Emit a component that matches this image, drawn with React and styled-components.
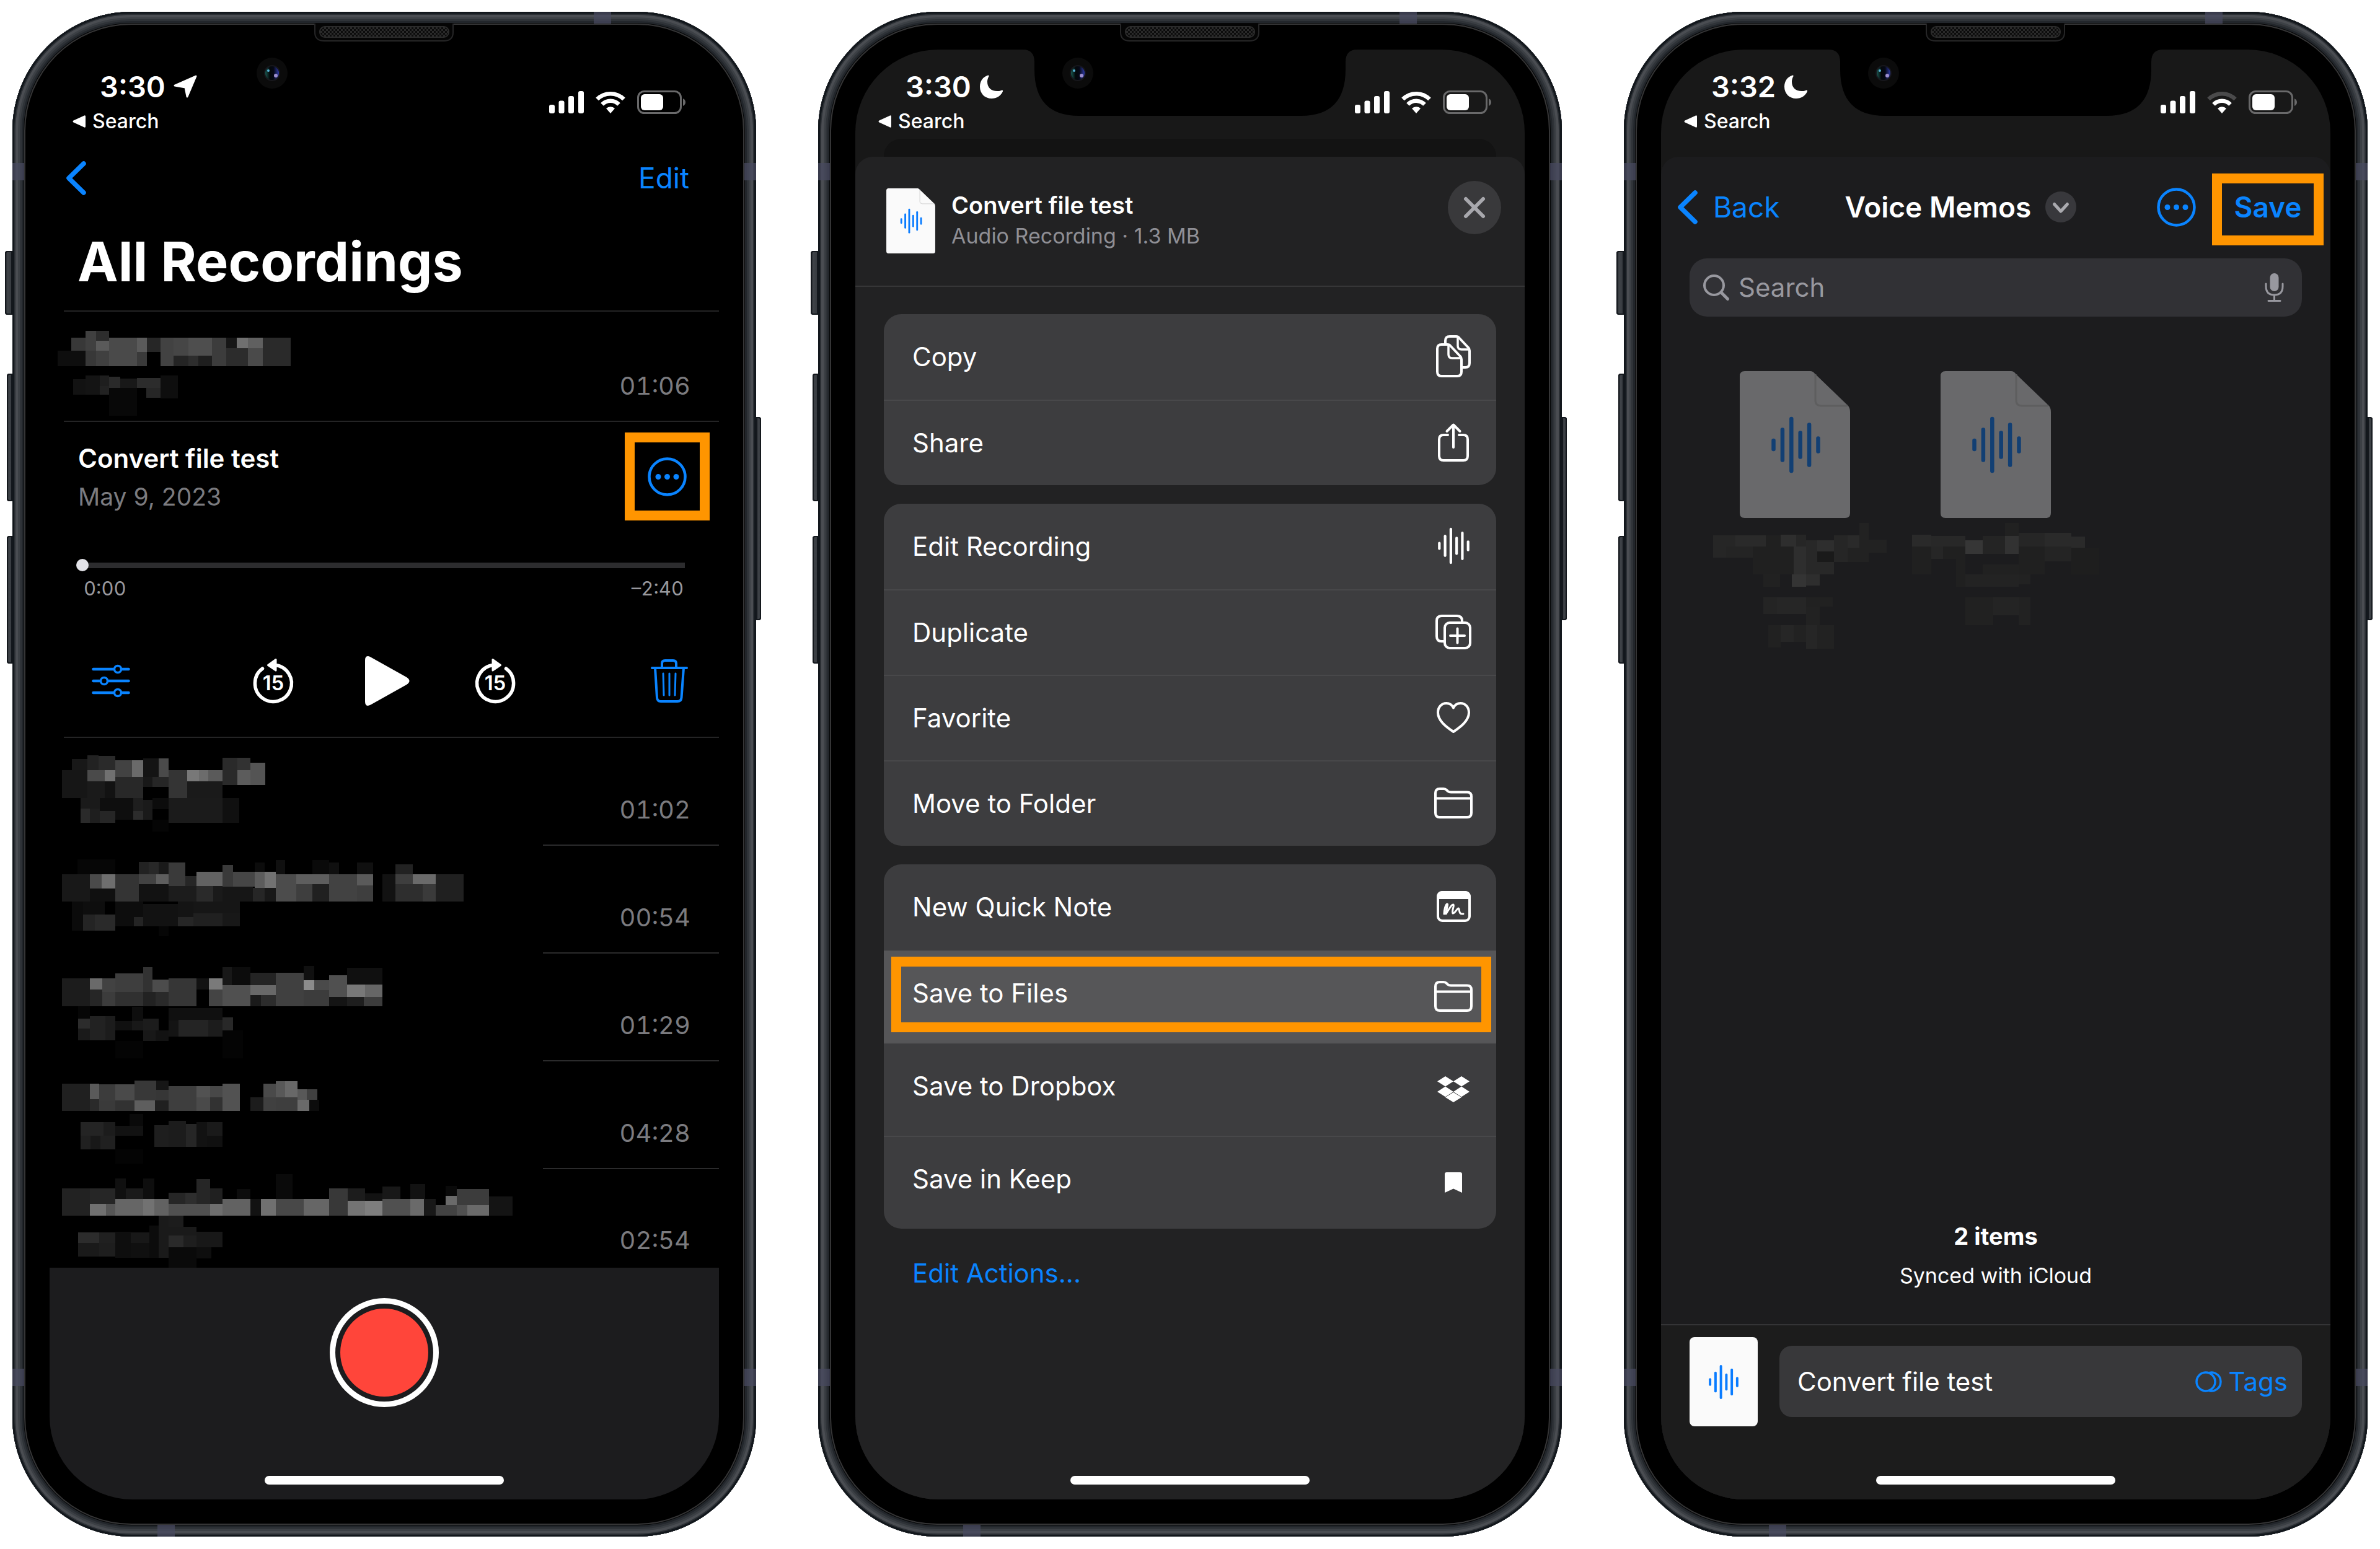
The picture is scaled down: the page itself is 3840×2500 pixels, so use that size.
import React, { useState } from "react";
import styled, { createGlobalStyle, css } from "styled-components";

const blue = "#0a84ff";
const orange = "#ff9500";
const font = `Inter, "Noto Sans", sans-serif`;

const GlobalStyle = createGlobalStyle`
  * { box-sizing: border-box; }
  body { margin: 0; background: #fff; font-family: ${font}; color: #fff; }
  button, input { font-family: inherit; color: inherit; margin: 0; }
  svg { display: block; flex: none; overflow: visible; }
`;

/* ---------- device ---------- */

const Page = styled.main`
  display: grid;
  grid-template-columns: repeat(3, minmax(0, 1fr));
  gap: 100px;
  padding: 19px 20px 20px;
`;

const Body = styled.section`
  position: relative;
  padding: 61px 60px 60px;
  border-radius: 192px;
  background: #000;
  box-shadow:
    inset 0 0 0 3px #12171c,
    inset 0 0 0 5px #2b2f34,
    inset 0 0 0 9px #4a4d52,
    inset 0 0 0 12px #3c4045,
    inset 0 0 0 15px #2f3338,
    inset 0 0 0 18px #22262b,
    inset 0 0 0 19px #060708,
    inset 0 0 0 21px #353536;
`;

const SideKey = styled.span`
  position: absolute;
  top: ${(p) => p.$top}px;
  height: ${(p) => p.$height}px;
  width: ${(p) => p.$width}px;
  ${(p) => (p.$right ? "left: 100%;" : "right: 100%;")}
  border-radius: ${(p) => (p.$right ? "0 4px 4px 0" : "4px 0 0 4px")};
  background: linear-gradient(to ${(p) => (p.$right ? "left" : "right")}, #15191e, #3f4348 35%, #33373c);
  box-shadow: inset 0 0 0 2px #14181d;
`;

const Antenna = styled.span`
  position: absolute;
  background: rgba(72, 74, 96, 0.72);
  ${(p) =>
    p.$edge === "left" || p.$edge === "right"
      ? css`
          ${p.$edge}: 0;
          top: ${p.$at}px;
          width: 19px;
          height: 28px;
        `
      : css`
          ${p.$edge}: 0;
          left: ${p.$at}px;
          width: 28px;
          height: 19px;
        `}
`;

const Screen = styled.div`
  position: relative;
  display: flex;
  flex-direction: column;
  aspect-ratio: 1080 / 2340;
  overflow: hidden;
  border-radius: 134px;
  background: ${(p) => p.$bg};
`;

const NotchWrap = styled.div`
  position: absolute;
  top: 19px;
  left: 50%;
  width: 542px;
  margin-left: -271px;
`;

const HomeIndicator = styled.div`
  position: absolute;
  left: 50%;
  bottom: 24px;
  width: 386px;
  height: 14px;
  margin-left: -193px;
  border-radius: 7px;
  background: #fff;
`;

const Notch = () => (
  <NotchWrap>
    <svg width="542" height="149" viewBox="0 0 542 149" aria-hidden="true">
      <defs>
        <pattern id="mesh" width="6" height="6" patternUnits="userSpaceOnUse">
          <rect width="6" height="6" fill="#0c0c0c" />
          <rect width="3" height="3" fill="#2a2a2a" />
          <rect x="3" y="3" width="3" height="3" fill="#2a2a2a" />
        </pattern>
        <linearGradient id="lens">
          <stop offset="0" stopColor="#1d6259" />
          <stop offset="0.35" stopColor="#04080a" />
          <stop offset="0.6" stopColor="#050816" />
          <stop offset="1" stopColor="#3340b8" />
        </linearGradient>
      </defs>
      <path d="M0 42H1Q20 42 20 62V74Q20 149 92 149H450Q522 149 522 74V62Q522 42 541 42H542V20H0Z" fill="#000" />
      <path d="M159 0V14Q159 28 174 28H367Q382 28 382 14V0" fill="#050505" stroke="#262627" strokeWidth="2" />
      <rect x="167" y="5" width="208" height="17" rx="8" fill="url(#mesh)" stroke="#2b2b2b" strokeWidth="2" />
      <circle cx="90" cy="80" r="25" fill="#0b0b0b" />
      <circle cx="90" cy="80" r="12" fill="url(#lens)" stroke="#17171c" strokeWidth="2" />
      <circle cx="84" cy="76" r="2" fill="#58b4d8" />
      <circle cx="96" cy="84" r="3" fill="#9d8fd0" />
    </svg>
  </NotchWrap>
);

/* ---------- status bar ---------- */

const Status = styled.header`
  display: flex;
  justify-content: space-between;
  align-items: flex-start;
  flex: none;
  height: 142px;
  padding: 30px 54px 0 37px;
`;

const Clock = styled.div`
  display: flex;
  align-items: center;
  gap: 13px;
  padding-left: 44px;
  font-size: 47px;
  font-weight: 600;
  line-height: 60px;
`;

const BackTo = styled.a`
  display: flex;
  align-items: center;
  gap: 11px;
  font-size: 32px;
  font-weight: 500;
  line-height: 52px;
  color: #fff;
  text-decoration: none;
`;

const Indicators = styled.div`
  display: flex;
  align-items: center;
  gap: 19px;
  height: 38px;
  margin-top: 36px;
`;

const LocationIcon = () => (
  <svg width="38" height="38" viewBox="0 0 38 38" fill="#fff" stroke="#fff" strokeWidth="3" strokeLinejoin="round" aria-hidden="true">
    <path d="M36 2 22 35 19 20 2 17Z" />
  </svg>
);

const MoonIcon = () => (
  <svg width="39" height="40" viewBox="0 0 39 40" fill="#fff" aria-hidden="true">
    <path d="M14 1.500C6 4 1 11 1 20c0 11 8 19 19 19 8 0 15-4.500 18-11.500.5-1.500-.5-2.300-2-1.800C33 27 31 27 29 27 19 27 13 21 13 12c0-3 .8-6 2.300-8.600.8-1.400.1-2.300-1.300-1.900Z" />
  </svg>
);

const StatusBar = ({ time, icon, weakWifi }) => (
  <Status>
    <div>
      <Clock>
        <span>{time}</span>
        {icon}
      </Clock>
      <BackTo href="#search">
        <svg width="21" height="20" viewBox="0 0 21 20" fill="#fff" aria-hidden="true">
          <path d="M19 .500Q21-.300 21 2V18q0 2.300-2 1.500L1.500 11.500Q-.500 10 1.500 8.500Z" />
        </svg>
        Search
      </BackTo>
    </div>
    <Indicators>
      <svg width="56" height="36" viewBox="0 0 56 36" fill="#fff" aria-hidden="true">
        <rect x="0" y="22" width="9" height="14" rx="3" />
        <rect x="15.500" y="15.500" width="9" height="20.500" rx="3" />
        <rect x="31" y="8" width="9" height="28" rx="3" />
        <rect x="47" y="0" width="9" height="36" rx="3" />
      </svg>
      <svg width="48" height="36" viewBox="0 0 48 36" fill="none" stroke="#fff" strokeWidth="6.500" aria-hidden="true">
        <path d="M2.500 13A30.500 30.500 0 0 1 45.500 13" stroke={weakWifi ? "#4a4a4b" : "#fff"} />
        <path d="M10.500 21.500A19 19 0 0 1 37.500 21.500" />
        <path d="M24 36 17 28A10.500 10.500 0 0 1 31 28Z" fill="#fff" stroke="none" />
      </svg>
      <svg width="78" height="38" viewBox="0 0 78 38" aria-hidden="true">
        <rect x="1.500" y="1.500" width="69" height="35" rx="10" fill="none" stroke="#69696a" strokeWidth="3" />
        <rect x="6" y="6" width="36" height="26" rx="6" fill="#fff" />
        <path d="M74 13Q78 15 78 19T74 25Z" fill="#69696a" />
      </svg>
    </Indicators>
  </Status>
);

const Phone = ({ bg, status, children, label }) => (
  <Body aria-label={label}>
    <SideKey $top={386} $height={103} $width={12} />
    <SideKey $top={584} $height={206} $width={9} />
    <SideKey $top={846} $height={206} $width={9} />
    <SideKey $right $top={654} $height={328} $width={8} />
    <Antenna $edge="left" $at={244} />
    <Antenna $edge="right" $at={244} />
    <Antenna $edge="left" $at={2190} />
    <Antenna $edge="right" $at={2190} />
    <Antenna $edge="top" $at={938} />
    <Antenna $edge="bottom" $at={234} />
    <Screen $bg={bg}>
      {status}
      {children}
      <HomeIndicator />
    </Screen>
    <Notch />
  </Body>
);

/* ---------- shared pieces ---------- */

const TextButton = styled.button`
  display: flex;
  align-items: center;
  gap: 25px;
  padding: 0;
  border: 0;
  background: none;
  color: ${blue};
  font-size: 46px;
  font-weight: ${(p) => (p.$strong ? 600 : 400)};
  line-height: 60px;
`;

const IconButton = styled.button`
  display: flex;
  align-items: center;
  justify-content: center;
  padding: 0;
  border: 0;
  background: none;
  color: ${(p) => p.$color || blue};
`;

const ChevronBack = () => (
  <svg width="32" height="55" viewBox="0 0 32 55" fill="none" stroke="currentColor" strokeWidth="7.500" strokeLinecap="round" strokeLinejoin="round" aria-hidden="true">
    <path d="M28 4 4 27.500 28 51" />
  </svg>
);

const MoreIcon = () => (
  <svg width="63" height="63" viewBox="0 0 63 63" fill="currentColor" aria-hidden="true">
    <circle cx="31.500" cy="31.500" r="29" fill="none" stroke="currentColor" strokeWidth="4.500" />
    <circle cx="17" cy="31.500" r="4.500" />
    <circle cx="31.500" cy="31.500" r="4.500" />
    <circle cx="46" cy="31.500" r="4.500" />
  </svg>
);

const waveHeights = [20, 55, 90, 45, 71, 27];

const WaveBars = () =>
  waveHeights.map((h, i) => (
    <line key={i} x1={3.5 + i * 14.4} x2={3.5 + i * 14.4} y1={45 - h / 2 + 3} y2={45 + h / 2 - 3} />
  ));

const WaveIcon = ({ width, height }) => (
  <svg width={width} height={height} viewBox="0 0 79 90" stroke="currentColor" strokeWidth="6.500" strokeLinecap="round" aria-hidden="true">
    <WaveBars />
  </svg>
);

const DocIcon = ({ width, height, paper, fold, wave }) => (
  <svg width={width} height={height} viewBox="0 0 178 237" aria-hidden="true">
    <path d="M8 0H114Q118 0 121 4L175 56Q178 60 178 66V229Q178 237 170 237H8Q0 237 0 229V8Q0 0 8 0Z" fill={paper} />
    <path d="M122 5V47Q122 56 132 56H174" fill="none" stroke={fold} strokeWidth="3" />
    <g transform="translate(51 74)" stroke={wave} strokeWidth="6.500" strokeLinecap="round">
      <WaveBars />
    </g>
  </svg>
);

/* Blocks are [left, top, right, bottom, grey level]. */
const Mosaic = ({ blocks, box, width, height }) => (
  <svg width={width} height={height} viewBox={box} preserveAspectRatio="none" shapeRendering="crispEdges" aria-hidden="true">
    {blocks.map(([l, t, r, b, g], i) => (
      <rect key={i} x={l} y={t} width={r - l} height={b - t} fill={`rgb(${g},${g},${g})`} />
    ))}
  </svg>
);

/* ---------- recordings ---------- */

const NavBar = styled.nav`
  display: flex;
  align-items: center;
  justify-content: space-between;
  flex: none;
  height: 130px;
  padding: 0 48px 0 27px;
`;

const Title = styled.h1`
  margin: 0 0 9px;
  padding-left: 45px;
  font-size: 88px;
  font-weight: 700;
  line-height: 140px;
`;

const List = styled.ul`
  margin: 0;
  padding: 0 0 0 23px;
  list-style: none;
`;

const Row = styled.li`
  display: flex;
  height: ${(p) => p.$height}px;
  border-top: ${(p) => (p.$full ? "2px solid #242425" : "0")};
`;

const Duration = styled.span`
  display: flex;
  flex: 1;
  align-items: flex-end;
  justify-content: flex-end;
  padding: 0 46px ${(p) => (p.$short ? 20 : 32)}px 0;
  border-top: ${(p) => (p.$line ? "2px solid #2b2b2c" : "0")};
  font-size: 40px;
  font-variant-numeric: tabular-nums;
  line-height: 48px;
  color: #7b7b7f;
`;

const Player = styled.li`
  height: 510px;
  padding-top: 17px;
  border-top: 2px solid #242425;
`;

const PlayerHead = styled.div`
  display: flex;
  justify-content: space-between;
  padding: 0 15px 0 23px;
`;

const PlayerName = styled.h2`
  margin: 11px 0 0;
  font-size: 42px;
  font-weight: 600;
  line-height: 62px;
`;

const PlayerDate = styled.p`
  margin: 0;
  font-size: 39px;
  line-height: 62px;
  color: #7b7b7f;
`;

const MarkedMore = styled(IconButton)`
  width: 137px;
  height: 142px;
  border: 16px solid ${orange};
`;

const Scrubber = styled.input`
  display: block;
  appearance: none;
  width: calc(100% - 75px);
  height: 20px;
  margin: 62px 55px 0 20px;
  background: linear-gradient(#2c2c2e, #2c2c2e) right center / calc(100% - 10px) 9px no-repeat;
  &::-webkit-slider-thumb {
    appearance: none;
    width: 20px;
    height: 20px;
    border-radius: 50%;
    background: #e3e3e8;
  }
`;

const Times = styled.div`
  display: flex;
  justify-content: space-between;
  margin: 8px 57px 0 32px;
  font-size: 31px;
  font-variant-numeric: tabular-nums;
  line-height: 40px;
  color: #98989d;
`;

const Controls = styled.div`
  display: grid;
  grid-template-columns: 1fr auto 1fr;
  align-items: center;
  height: 90px;
  margin-top: 84px;
  padding: 0 50px 0 27px;
`;

const Transport = styled.div`
  display: flex;
  align-items: center;
  gap: 105px;
`;

const OptionsButton = styled(IconButton)`
  justify-self: start;
  margin-left: 18px;
`;

const TrashButton = styled(IconButton)`
  justify-self: end;
`;

const RecordBar = styled.footer`
  display: flex;
  flex: 1;
  align-items: flex-start;
  justify-content: center;
  padding-top: 49px;
  background: #1c1c1e;
`;

const RecordButton = styled.button`
  width: 176px;
  height: 176px;
  padding: 8px;
  border: 9px solid #fff;
  border-radius: 50%;
  background: #ff453a content-box;
`;

const SkipIcon = ({ forward }) => (
  <svg width="66" height="73" viewBox="0 0 66 73" aria-hidden="true">
    <g transform={forward ? "matrix(-1 0 0 1 66 0)" : undefined}>
      <path d="M36 10.500A29.500 29.500 0 1 1 15.500 16" fill="none" stroke="#fff" strokeWidth="5.500" strokeLinecap="round" />
      <path d="M37 1.500V19L24.500 10.500Z" fill="#fff" stroke="#fff" strokeWidth="3" strokeLinejoin="round" />
    </g>
    <text x="33" y="51" textAnchor="middle" fontFamily="Inter, sans-serif" fontSize="33" fontWeight="600" fill="#fff">
      15
    </text>
  </svg>
);

const rows = [
  {
    time: "01:02",
    box: "128 15 962 303",
    blocks: [
      [124,106,175,184,22],[144,75,175,106,24],[175,64,198,106,34],[198,66,231,106,42],[175,106,210,137,74],[210,106,231,137,112],
      [175,137,210,184,26],[210,137,231,184,18],[231,77,265,124,66],[265,77,287,124,106],[231,124,287,184,40],[287,72,319,124,20],
      [319,72,338,124,74],[287,124,306,152,24],[306,124,338,152,38],[338,106,376,184,52],[376,106,399,137,120],[399,106,418,137,108],
      [418,106,446,137,90],[376,137,446,184,26],[446,70,477,148,42],[477,70,502,106,50],[477,106,502,148,92],[502,84,533,148,84],
      [161,184,200,213,26],[200,184,231,220,14],[161,213,180,253,42],[180,213,200,253,30],[200,220,231,253,38],[231,184,268,245,14],
      [268,184,287,220,30],[268,220,287,245,44],[287,190,306,245,26],[306,184,338,216,12],[338,184,446,253,27],[446,184,480,254,16],
      [306,245,338,278,5],
    ],
  },
  {
    time: "00:54",
    box: "128 318 962 303",
    blocks: [
      [124,401,180,478,24],[180,401,204,442,74],[204,401,231,442,110],[180,442,231,478,16],[231,401,278,478,52],[278,366,298,401,34],
      [298,366,319,401,40],[319,366,338,401,26],[278,401,314,430,66],[314,401,338,430,94],[278,430,338,478,18],[338,368,372,434,58],
      [372,406,394,434,38],[338,434,394,478,28],[394,395,446,434,98],[394,434,428,478,42],[428,434,446,478,26],[446,375,468,436,58],
      [446,436,508,478,22],[468,395,511,436,70],[511,395,531,440,92],[531,395,553,440,114],[508,440,531,478,38],[531,440,553,478,24],
      [511,368,531,395,12],[553,362,572,401,16],[553,401,595,478,76],[595,401,661,430,94],[595,430,627,478,62],[627,430,661,478,32],
      [627,362,661,401,10],[661,368,680,401,16],[661,401,717,478,66],[717,368,749,401,16],[717,401,749,433,90],[717,433,749,478,62],
      [768,401,794,478,18],[794,373,829,401,34],[794,401,829,430,62],[829,401,875,430,106],[794,430,849,478,46],[849,430,875,478,58],
      [875,401,931,478,32],[156,360,231,401,6],[144,478,166,560,11],[166,478,210,514,14],[166,514,190,560,36],[190,514,231,560,42],
      [231,478,287,548,13],[269,521,287,548,36],[287,486,357,548,18],[357,478,388,521,20],[388,478,482,514,22],[357,521,388,548,38],
      [388,512,446,548,32],[446,512,482,548,24],[319,548,338,576,6],
    ],
  },
  {
    time: "01:29",
    box: "128 621 962 303",
    blocks: [
      [124,695,180,773,28],[180,695,205,725,106],[205,695,231,733,66],[180,725,205,773,38],[205,733,231,773,60],[231,681,287,733,62],
      [231,733,287,773,48],[287,662,306,733,50],[306,697,338,733,76],[287,733,312,773,34],[312,733,338,773,42],[338,695,394,773,54],
      [394,695,419,725,18],[419,695,446,725,122],[419,725,446,773,68],[446,662,465,714,24],[465,662,502,714,12],[446,714,502,773,80],
      [502,679,553,714,36],[502,714,553,742,104],[502,742,524,773,26],[524,742,553,773,44],[553,679,609,773,64],[609,660,631,700,16],
      [609,700,631,728,140],[631,700,661,728,74],[609,728,661,773,60],[661,685,697,747,80],[661,747,697,773,20],[697,664,768,711,16],
      [697,711,733,747,120],[733,711,768,747,102],[697,747,730,773,30],[730,747,768,773,60],[157,773,180,808,6],[157,808,180,836,44],
      [157,836,180,868,26],[180,801,211,868,34],[211,801,231,868,28],[231,814,265,841,16],[265,774,287,814,14],[265,814,287,841,24],
      [287,808,319,841,28],[287,841,312,870,24],[312,841,338,870,18],[338,778,446,812,16],[338,812,358,857,20],[358,810,418,857,36],
      [418,810,446,857,28],[446,803,468,841,40],[446,841,488,918,4],[231,870,287,918,4],
    ],
  },
  {
    time: "04:28",
    box: "128 924 962 303",
    blocks: [
      [124,990,180,1067,32],[180,990,199,1033,90],[199,992,231,1037,60],[180,1033,199,1067,42],[199,1037,231,1067,58],[231,992,270,1037,74],
      [231,1037,270,1067,50],[270,981,314,1037,56],[270,1037,311,1067,94],[314,981,338,1007,22],[314,1007,338,1037,54],[311,1037,338,1067,32],
      [338,998,394,1067,62],[394,998,422,1028,82],[422,998,446,1028,72],[394,1028,422,1067,74],[422,1028,446,1067,50],[446,990,482,1067,82],
      [503,1028,529,1067,28],[529,990,553,1028,74],[529,1028,553,1067,64],[553,984,572,1028,88],[572,984,597,1028,104],[553,1028,597,1067,62],
      [597,1006,616,1035,88],[616,1006,637,1035,64],[597,1035,621,1067,106],[621,1035,641,1067,12],[161,1098,208,1136,36],[208,1098,231,1136,28],
      [161,1136,182,1175,32],[182,1136,202,1175,24],[202,1136,231,1175,32],[231,1108,287,1136,18],[260,1075,287,1108,10],[310,1106,338,1168,30],
      [338,1094,373,1167,28],[373,1103,394,1167,38],[394,1098,416,1167,18],[416,1098,446,1136,26],[416,1136,446,1167,16],[231,1175,287,1214,4],
    ],
  },
  {
    time: "02:54",
    box: "128 1227 962 281",
    short: true,
    blocks: [
      [124,1284,180,1361,34],[180,1284,231,1328,38],[180,1328,213,1361,112],[213,1328,231,1361,86],[231,1256,253,1314,16],[253,1284,287,1314,26],
      [287,1256,310,1314,14],[231,1314,287,1361,102],[287,1314,310,1361,114],[310,1314,338,1361,98],[338,1296,372,1328,38],[372,1296,394,1328,46],
      [394,1258,422,1328,38],[422,1284,446,1328,32],[338,1328,422,1361,80],[422,1328,446,1361,110],[446,1314,502,1361,98],[475,1286,502,1314,12],
      [502,1314,524,1361,18],[524,1314,553,1361,112],[553,1244,587,1314,10],[553,1314,609,1361,72],[609,1314,661,1361,102],[661,1284,698,1361,56],
      [698,1284,733,1319,28],[698,1319,733,1361,116],[733,1298,768,1319,18],[733,1319,768,1361,126],[768,1279,804,1314,24],[768,1314,824,1361,80],
      [824,1272,854,1314,18],[824,1314,851,1361,106],[851,1314,875,1361,24],[875,1331,917,1361,66],[894,1305,917,1331,106],[894,1277,917,1305,10],
      [917,1286,982,1331,60],[917,1331,938,1361,80],[938,1331,982,1361,106],[982,1307,1029,1361,20],[157,1409,199,1439,44],[199,1409,231,1439,32],
      [157,1439,199,1476,26],[199,1439,231,1476,30],[231,1406,263,1480,14],[263,1408,300,1439,24],[263,1439,300,1480,16],[300,1390,319,1480,12],
      [319,1362,338,1480,26],[338,1362,368,1392,28],[338,1392,394,1418,26],[338,1418,368,1451,42],[368,1418,394,1451,30],[394,1406,446,1450,24],
      [394,1450,424,1482,14],[338,1451,394,1508,10],
    ],
  },
];

const firstRow = [
  [143,1219,172,1268,56],[172,1196,193,1268,64],[193,1196,219,1232,45],[193,1232,219,1268,90],[116,1268,172,1322,14],[172,1268,193,1322,56],
  [193,1268,219,1322,64],[219,1221,275,1322,74],[275,1221,295,1272,90],[275,1272,295,1322,58],[295,1221,322,1272,38],[322,1221,348,1322,66],
  [348,1221,378,1284,70],[378,1221,426,1284,78],[348,1284,378,1322,36],[378,1284,398,1322,45],[398,1284,426,1322,30],[426,1221,454,1322,60],
  [454,1221,475,1257,22],[475,1221,498,1257,112],[498,1221,528,1257,96],[454,1257,498,1322,44],[498,1257,528,1322,74],[528,1221,584,1322,42],
  [147,1369,172,1427,18],[172,1357,200,1427,20],[200,1357,219,1394,30],[200,1394,219,1427,34],[219,1360,241,1402,42],[241,1367,275,1402,24],
  [275,1366,322,1402,44],[294,1402,322,1438,38],[322,1357,357,1440,14],[219,1402,275,1502,8],
];

const Recordings = () => {
  const [position, setPosition] = useState(0);
  return (
    <Phone bg="#000" label="Voice Memos recordings" status={<StatusBar time="3:30" icon={<LocationIcon />} />}>
      <NavBar>
        <IconButton aria-label="Back">
          <ChevronBack />
        </IconButton>
        <TextButton>Edit</TextButton>
      </NavBar>
      <Title>All Recordings</Title>
      <List>
        <Row $full $height={178}>
          <Mosaic blocks={firstRow} box="128 1126 962 394" width={773} height={176} />
          <Duration>01:06</Duration>
        </Row>
        <Player>
          <PlayerHead>
            <div>
              <PlayerName>Convert file test</PlayerName>
              <PlayerDate>May 9, 2023</PlayerDate>
            </div>
            <MarkedMore aria-label="More">
              <MoreIcon />
            </MarkedMore>
          </PlayerHead>
          <Scrubber
            type="range"
            min="0"
            max="160"
            value={position}
            onChange={(e) => setPosition(Number(e.target.value))}
            aria-label="Playback position"
          />
          <Times>
            <span>0:00</span>
            <span>–2:40</span>
          </Times>
          <Controls>
            <OptionsButton aria-label="Playback options">
              <svg width="62" height="52" viewBox="0 0 62 52" fill="none" stroke="currentColor" strokeWidth="4.500" strokeLinecap="round" aria-hidden="true">
                <path d="M2.500 7H35M49 7H59.500M2.500 26H13M27 26H59.500M2.500 45H35M49 45H59.500" />
                <circle cx="42" cy="7" r="5.500" strokeWidth="3.500" />
                <circle cx="20" cy="26" r="5.500" strokeWidth="3.500" />
                <circle cx="42" cy="45" r="5.500" strokeWidth="3.500" />
              </svg>
            </OptionsButton>
            <Transport>
              <IconButton aria-label="Back 15 seconds">
                <SkipIcon />
              </IconButton>
              <IconButton aria-label="Play">
                <svg width="82" height="80" viewBox="-10 0 82 80" fill="#fff" aria-hidden="true">
                  <path d="M0 7Q0-3 9 1.500L67 34Q76 40 67 46L9 78.500Q0 83 0 73Z" />
                </svg>
              </IconButton>
              <IconButton aria-label="Forward 15 seconds">
                <SkipIcon forward />
              </IconButton>
            </Transport>
            <TrashButton aria-label="Delete">
              <svg width="60" height="70" viewBox="0 0 60 70" fill="none" stroke="currentColor" strokeWidth="4" strokeLinecap="round" strokeLinejoin="round" aria-hidden="true">
                <path d="M2 14H58M18 14V7Q18 2 23 2H36Q41 2 41 7V14M7 14 10 62Q10.500 68 16 68H43Q49 68 49.500 62L53 14" />
                <path d="M20 23 21 58M30 23V58M40 23 39 58" strokeWidth="3" />
              </svg>
            </TrashButton>
          </Controls>
        </Player>
        {rows.map((row, i) => (
          <Row key={row.time} $full={i === 0} $height={row.short ? 161 : 174}>
            <Mosaic blocks={row.blocks} box={row.box} width={773} height={row.short ? 161 : 174} />
            <Duration $line={i > 0} $short={row.short}>
              {row.time}
            </Duration>
          </Row>
        ))}
      </List>
      <RecordBar>
        <RecordButton aria-label="Record" />
      </RecordBar>
    </Phone>
  );
};

/* ---------- share sheet ---------- */

const SheetBehind = styled.div`
  flex: none;
  height: 29px;
  margin: 2px 46px 0;
  border-radius: 28px 28px 0 0;
  background: #131313;
`;

const Sheet = styled.div`
  display: flex;
  flex: 1;
  flex-direction: column;
  margin-top: ${(p) => p.$gap || 0}px;
  border-radius: 28px 28px 0 0;
  background: ${(p) => p.$bg};
`;

const SheetHead = styled.div`
  display: flex;
  align-items: flex-start;
  height: 210px;
  padding: 39px 38px 0 50px;
  border-bottom: 2px solid #363637;
`;

const HeadIcon = styled.div`
  padding-top: 12px;
`;

const HeadText = styled.div`
  flex: 1;
  padding: 15px 0 0 26px;
`;

const HeadTitle = styled.h2`
  margin: 0;
  font-size: 38px;
  font-weight: 600;
  line-height: 49px;
`;

const HeadMeta = styled.p`
  margin: 0;
  font-size: 34px;
  line-height: 49px;
  color: #8f8f95;
`;

const CloseButton = styled.button`
  display: flex;
  align-items: center;
  justify-content: center;
  width: 86px;
  height: 86px;
  padding: 0;
  border: 0;
  border-radius: 50%;
  background: #39393b;
  color: #a8a8ad;
`;

const Cards = styled.div`
  display: flex;
  flex-direction: column;
  gap: 30px;
  padding: 44px 46px 0;
`;

const Card = styled.div`
  overflow: hidden;
  border-radius: 28px;
  background: #3d3d3f;
`;

const Action = styled.button`
  position: relative;
  display: flex;
  align-items: center;
  justify-content: space-between;
  width: 100%;
  height: ${(p) => (p.$tall ? 150 : 138)}px;
  padding: 0 37px 2px 46px;
  border: 0;
  background: ${(p) => (p.$active ? "#565658" : "none")};
  font-size: 42px;
  text-align: left;
  & + & {
    border-top: 2px solid ${(p) => (p.$active ? "#565658" : "#48484a")};
  }
`;

const ActionLabel = styled.span`
  padding-bottom: ${(p) => (p.$tall ? 12 : 0)}px;
`;

const ActionIcon = styled.span`
  display: flex;
  justify-content: center;
  width: 64px;
`;

const Marker = styled.span`
  position: absolute;
  inset: 9px 8px 17px 12px;
  border: 16px solid ${orange};
`;

const EditActions = styled.button`
  align-self: flex-start;
  margin: 12px 0 0;
  padding: 0 46px;
  border: 0;
  background: none;
  color: ${blue};
  font-size: 42px;
  line-height: 60px;
`;

const Line = ({ width, height, children }) => (
  <svg
    width={width}
    height={height}
    viewBox={`0 0 ${width} ${height}`}
    fill="none"
    stroke="#fff"
    strokeWidth="4"
    strokeLinecap="round"
    strokeLinejoin="round"
    aria-hidden="true"
  >
    {children}
  </svg>
);

const FolderIcon = () => (
  <Line width={62} height={50}>
    <path d="M2 9Q2 2 9 2H15Q18 2 20 4L22 6Q24 7.500 27 7.500H53Q60 7.500 60 14.500V41Q60 48 53 48H9Q2 48 2 41ZM2 17.500H60" />
  </Line>
);

const groups = [
  [
    {
      label: "Copy",
      icon: (
        <Line width={56} height={68}>
          <path d="M2 22Q2 15 9 15H19Q21 15 22.500 16.500L39 34Q41 36 41 39V59Q41 66 34 66H9Q2 66 2 59Z" />
          <path d="M20 16V31Q20 37 26 37H40" strokeWidth="3.500" />
          <path d="M15 14V9Q15 2 22 2H33Q35 2 36.500 3.500L52 20Q54 22 54 25V45Q54 52 47 52H42" />
          <path d="M35 3V17Q35 23 41 23H53" strokeWidth="3.500" />
        </Line>
      ),
    },
    {
      label: "Share",
      icon: (
        <Line width={50} height={62}>
          <path d="M16 19H9Q2 19 2 26V53Q2 60 9 60H41Q48 60 48 53V26Q48 19 41 19H34M25 39V3M14.500 13 25 2.500 35.500 13" />
        </Line>
      ),
    },
  ],
  [
    { label: "Edit Recording", icon: <WaveIcon width={51} height={58} /> },
    {
      label: "Duplicate",
      icon: (
        <Line width={58} height={56}>
          <path d="M15 43H10Q2 43 2 35V10Q2 2 10 2H35Q43 2 43 10V13" />
          <rect x="15" y="13" width="41" height="41" rx="8" />
          <path d="M35.500 22.500V45.500M24 34H47" />
        </Line>
      ),
    },
    {
      label: "Favorite",
      icon: (
        <Line width={54} height={50}>
          <path d="M27 48C15 40 2 30 2 17C2 8 8 2 15.500 2C21 2 25 5 27 9.500C29 5 33 2 38.500 2C46 2 52 8 52 17C52 30 39 40 27 48Z" />
        </Line>
      ),
    },
    { label: "Move to Folder", icon: <FolderIcon /> },
  ],
  [
    {
      label: "New Quick Note",
      icon: (
        <Line width={55} height={50}>
          <rect x="2" y="2" width="51" height="46" rx="7" />
          <path d="M2 11Q2 2 10 2H45Q53 2 53 11Z" fill="#fff" />
          <path d="M12 37C12 32 14 22 17 21C19 21 15 31 15 37C19 31 24 21 27 22C29 23 24 32 26 36C29 37 33 28 35 28C38 29 34 38 43 37" strokeWidth="3" />
        </Line>
      ),
    },
    { label: "Save to Files", icon: <FolderIcon />, tall: true, active: true },
    {
      label: "Save to Dropbox",
      tall: true,
      icon: (
        <svg width="52" height="42" viewBox="0 0 52 42" fill="#fff" aria-hidden="true">
          <path d="M13 0 26 8.300 13 16.600 0 8.300ZM39 0 52 8.300 39 16.600 26 8.300ZM13 16.600 26 24.900 13 33.200 0 24.900ZM39 16.600 52 24.900 39 33.200 26 24.900ZM26 26 39 34 26 42 13 34Z" />
        </svg>
      ),
    },
    {
      label: "Save in Keep",
      tall: true,
      icon: (
        <svg width="28" height="33" viewBox="0 0 28 33" fill="#fff" aria-hidden="true">
          <path d="M3 0H25Q28 0 28 3V33L14 26.500 0 33V3Q0 0 3 0Z" />
        </svg>
      ),
    },
  ],
];

const ShareSheet = () => (
  <Phone bg="#181818" label="Share sheet" status={<StatusBar time="3:30" icon={<MoonIcon />} />}>
    <SheetBehind />
    <Sheet $bg="#222223">
      <SheetHead>
        <HeadIcon>
          <DocIcon width={79} height={105} paper="#fafafa" fold="#dcdcdc" wave="#0a7cff" />
        </HeadIcon>
        <HeadText>
          <HeadTitle>Convert file test</HeadTitle>
          <HeadMeta>Audio Recording · 1.3 MB</HeadMeta>
        </HeadText>
        <CloseButton aria-label="Close">
          <svg width="36" height="36" viewBox="0 0 36 36" stroke="currentColor" strokeWidth="6" strokeLinecap="round" aria-hidden="true">
            <path d="M4 4 32 32M32 4 4 32" />
          </svg>
        </CloseButton>
      </SheetHead>
      <Cards>
        {groups.map((group, i) => (
          <Card key={i}>
            {group.map((action) => (
              <Action key={action.label} $tall={action.tall} $active={action.active}>
                <ActionLabel $tall={action.tall}>{action.label}</ActionLabel>
                <ActionIcon>{action.icon}</ActionIcon>
                {action.active && <Marker />}
              </Action>
            ))}
          </Card>
        ))}
        <EditActions>Edit Actions...</EditActions>
      </Cards>
    </Sheet>
  </Phone>
);

/* ---------- save dialog ---------- */

const DialogNav = styled.nav`
  display: flex;
  align-items: center;
  flex: none;
  height: 162px;
  padding: 0 11px 0 27px;
`;

const FolderButton = styled.button`
  display: flex;
  align-items: center;
  gap: 23px;
  margin: 0 auto 0 105px;
  padding: 0;
  border: 0;
  background: none;
  font-size: 46px;
  font-weight: 600;
  line-height: 60px;
`;

const MarkedSave = styled(TextButton)`
  justify-content: center;
  width: 180px;
  height: 116px;
  margin: 8px 0 0 26px;
  padding-bottom: 8px;
  border: 16px solid ${orange};
`;

const SearchBox = styled.label`
  display: flex;
  align-items: center;
  flex: none;
  gap: 15px;
  height: 94px;
  margin: 2px 46px 0;
  padding: 0 29px 0 22px;
  border-radius: 28px;
  background: #313135;
  color: #98989f;
`;

const PlainInput = styled.input`
  flex: 1;
  min-width: 0;
  padding: 0;
  border: 0;
  outline: 0;
  background: none;
  font-size: 42px;
  line-height: 60px;
  &::placeholder {
    color: #98989f;
    opacity: 1;
  }
`;

const Files = styled.ul`
  display: flex;
  flex: 1;
  margin: 0;
  padding: 88px 54px 0;
  list-style: none;
`;

const FileItem = styled.li`
  display: flex;
  flex-direction: column;
  align-items: center;
  gap: 8px;
  width: 324px;
`;

const Summary = styled.div`
  padding-bottom: 47px;
  border-bottom: 2px solid #343436;
  text-align: center;
  line-height: 63px;
`;

const Count = styled.p`
  margin: 0;
  font-size: 38px;
  font-weight: 700;
`;

const Sync = styled.p`
  margin: 0;
  font-size: 34px;
`;

const SaveFooter = styled.footer`
  display: flex;
  align-items: flex-start;
  gap: 35px;
  height: 281px;
  padding: 19px 46px 0;
  background: #1c1c1c;
`;

const Thumb = styled.div`
  display: flex;
  align-items: center;
  justify-content: center;
  flex: none;
  width: 110px;
  height: 144px;
  border-radius: 8px;
  background: #fafafa;
  color: #0a7cff;
`;

const NameField = styled.div`
  display: flex;
  align-items: center;
  flex: 1;
  min-width: 0;
  height: 115px;
  margin-top: 14px;
  padding: 0 23px 0 29px;
  border-radius: 20px;
  background: #38383a;
`;

const TagsButton = styled(TextButton)`
  gap: 9px;
  font-size: 42px;
`;

const fileOne = [
  [207,847,253,940,38],[253,847,314,894,42],[233,894,288,940,36],[314,847,345,894,32],[345,844,376,894,46],[376,844,397,894,38],
  [288,894,371,1010,32],[371,894,397,1010,46],[397,868,420,1010,40],[420,868,454,915,46],[420,915,454,959,26],[420,959,454,1010,40],
  [454,847,481,959,38],[481,847,505,898,42],[481,898,505,959,34],[505,794,525,959,34],[525,865,561,920,34],[310,1010,344,1063,33],
  [368,1010,397,1063,52],[397,1010,425,1058,46],[310,1108,337,1179,36],[337,1108,397,1179,38],[397,1108,451,1147,33],[397,1147,425,1226,34],
  [319,1226,345,1321,33],[345,1226,371,1296,38],[371,1226,397,1296,34],[397,1226,420,1325,38],[420,1226,454,1325,34],
];

const fileTwo = [
  [613,844,652,894,42],[613,894,652,1010,32],[652,849,722,894,40],[652,894,677,946,38],[677,894,722,946,32],[722,868,757,925,54],
  [757,849,803,925,36],[803,795,831,849,33],[803,849,831,925,50],[831,836,884,894,38],[884,836,938,894,42],[938,852,966,898,42],
  [831,894,884,1010,32],[884,894,938,956,36],[757,970,831,1010,33],[703,946,722,1063,32],[722,1010,831,1063,35],[831,1010,855,1053,34],
  [722,1108,779,1226,33],[779,1108,831,1184,36],[831,1108,855,1226,34],[938,898,995,1010,30],
];

const SaveDialog = () => {
  const [name, setName] = useState("Convert file test");
  return (
    <Phone bg="#181818" label="Save to Voice Memos" status={<StatusBar time="3:32" icon={<MoonIcon />} weakWifi />}>
      <Sheet $bg="#1c1c1e" $gap={31}>
        <DialogNav>
          <TextButton>
            <ChevronBack />
            Back
          </TextButton>
          <FolderButton>
            Voice Memos
            <svg width="50" height="50" viewBox="0 0 50 50" fill="none" aria-hidden="true">
              <circle cx="25" cy="25" r="25" fill="#38383c" />
              <path d="M14.500 20.500 25 32 35.500 20.500" stroke="#aaaaaf" strokeWidth="5" strokeLinecap="round" strokeLinejoin="round" />
            </svg>
          </FolderButton>
          <IconButton aria-label="More">
            <MoreIcon />
          </IconButton>
          <MarkedSave $strong>Save</MarkedSave>
        </DialogNav>
        <SearchBox>
          <svg width="42" height="42" viewBox="0 0 42 42" fill="none" stroke="currentColor" strokeWidth="4" strokeLinecap="round" aria-hidden="true">
            <circle cx="17.500" cy="17.500" r="15.500" />
            <path d="M29 29 39.500 39.500" strokeWidth="5" />
          </svg>
          <PlainInput type="search" placeholder="Search" aria-label="Search" />
          <svg width="31" height="46" viewBox="0 0 31 46" fill="none" stroke="currentColor" strokeWidth="3" strokeLinecap="round" aria-hidden="true">
            <rect x="8.500" y="0" width="14" height="29" rx="7" fill="currentColor" stroke="none" />
            <path d="M2 17V21Q2 35 15.500 35T29 21V17M15.500 35V43M6 44.500H25" />
          </svg>
        </SearchBox>
        <Files>
          <FileItem>
            <DocIcon width={178} height={237} paper="#69696b" fold="#5e5e5f" wave="#123f73" />
            <Mosaic blocks={fileOne} box="169 794 410 531" width={324} height={203} />
          </FileItem>
          <FileItem>
            <DocIcon width={178} height={237} paper="#69696b" fold="#5e5e5f" wave="#123f73" />
            <Mosaic blocks={fileTwo} box="579 794 410 531" width={324} height={203} />
          </FileItem>
        </Files>
        <Summary>
          <Count>2 items</Count>
          <Sync>Synced with iCloud</Sync>
        </Summary>
        <SaveFooter>
          <Thumb>
            <WaveIcon width={48} height={55} />
          </Thumb>
          <NameField>
            <PlainInput value={name} onChange={(e) => setName(e.target.value)} aria-label="File name" />
            <TagsButton>
              <svg width="44" height="34" viewBox="0 0 44 34" fill="none" stroke="currentColor" strokeWidth="3.500" strokeLinecap="round" aria-hidden="true">
                <circle cx="17" cy="17" r="15" />
                <path d="M23 2.500Q28 1 32.500 3.500A15 15 0 0 1 32.500 30.500Q28 33 23 31.500" />
              </svg>
              Tags
            </TagsButton>
          </NameField>
        </SaveFooter>
      </Sheet>
    </Phone>
  );
};

export default function App() {
  return (
    <>
      <GlobalStyle />
      <Page>
        <Recordings />
        <ShareSheet />
        <SaveDialog />
      </Page>
    </>
  );
}
